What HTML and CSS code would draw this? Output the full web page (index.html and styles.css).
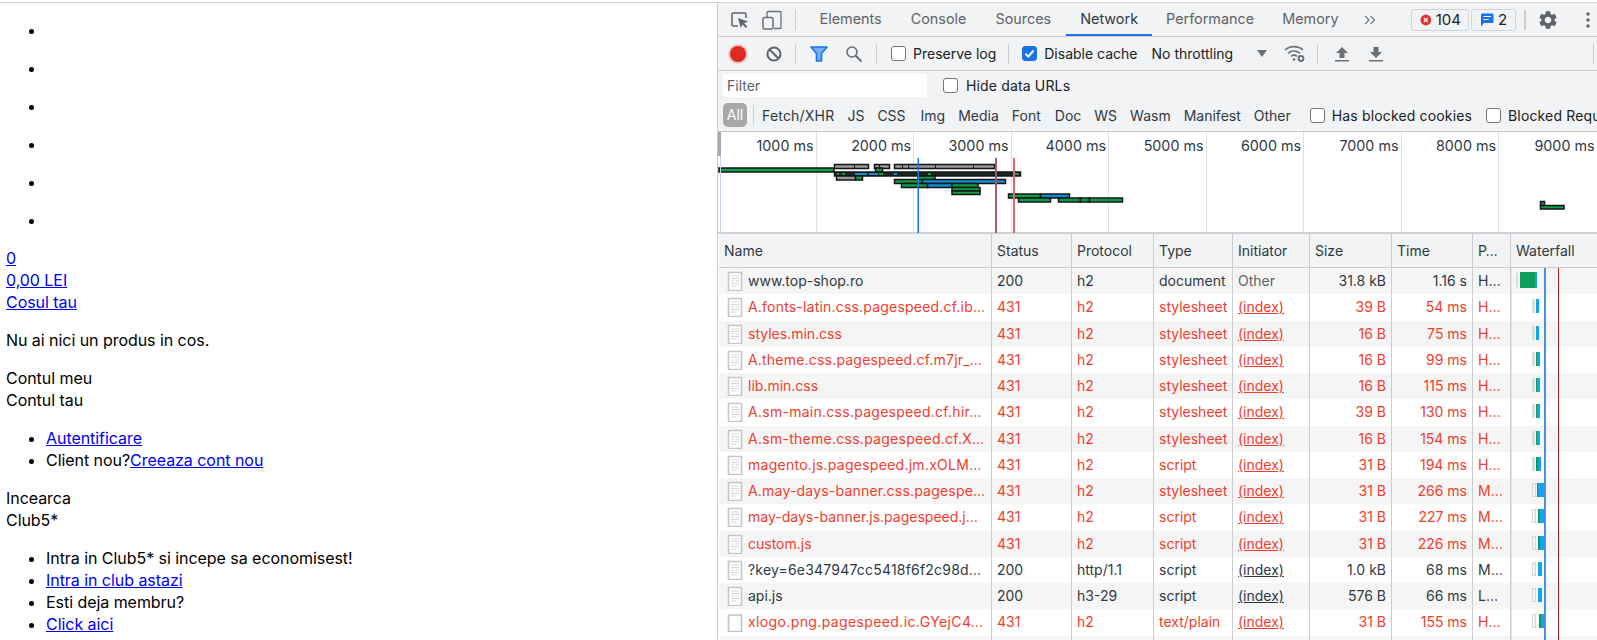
FILE: index.html
```html
<!DOCTYPE html>
<html lang="ro">
<head>
<meta charset="utf-8">
<title>top-shop.ro</title>
<link rel="stylesheet" href="styles.css">
</head>
<body>
<svg class="defs" width="0" height="0" aria-hidden="true">
  <symbol id="doc" viewBox="0 0 16 20">
    <path d="M1.500 1.500h13v18h-13z" fill="#fff" stroke="#c4c6c8" stroke-width="1.600"/>
    <path d="M4 5h8M4 7.500h8M4 10h3M8.500 10H12M4 12.500h8M4 15h5" stroke="#d5d7d9" stroke-width="1.200" fill="none"/>
  </symbol>
  <symbol id="blank" viewBox="0 0 16 20">
    <path d="M1.500 3h13v16.500h-13z" fill="#fff" stroke="#c0c2c4" stroke-width="1.600"/>
  </symbol>
</svg>
<div class="screen">
  <main class="page">
    <ul class="nav"><li></li><li></li><li></li><li></li><li></li><li></li></ul>
    <div><a href="#">0</a></div>
    <div><a href="#">0,00 LEI</a></div>
    <div><a href="#">Cosul tau</a></div>
    <p>Nu ai nici un produs in cos.</p>
    <div>Contul meu</div>
    <div>Contul tau</div>
    <ul>
      <li><a href="#">Autentificare</a></li>
      <li>Client nou?<a href="#">Creeaza cont nou</a></li>
    </ul>
    <div>Incearca</div>
    <div>Club5*</div>
    <ul>
      <li>Intra in Club5* si incepe sa economisest!</li>
      <li><a href="#">Intra in club astazi</a></li>
      <li>Esti deja membru?</li>
      <li><a href="#">Click aici</a></li>
    </ul>
  </main>
  <section class="devtools">
    <div class="tabbar">
      <svg class="ic ic-inspect" width="20" height="20" viewBox="0 0 20 20"><path d="M8 16H3.500A1.500 1.500 0 0 1 2 14.500V4.500A1.500 1.500 0 0 1 3.500 3h11A1.500 1.500 0 0 1 16 4.500V8" fill="none" stroke="#5f6368" stroke-width="1.500"/><path d="M8 8l10 3.500-4 1.700 3.300 3.300-1.400 1.400-3.300-3.300L10.800 18z" fill="#5f6368"/></svg>
      <svg class="ic ic-device" width="20" height="20" viewBox="0 0 20 20"><path d="M5 7V2.500A1 1 0 0 1 6 1.500h12a1 1 0 0 1 1 1v15a1 1 0 0 1-1 1h-6" fill="none" stroke="#6b7075" stroke-width="1.300"/><rect x="1" y="7.500" width="10" height="11.500" rx="1.500" fill="none" stroke="#6b7075" stroke-width="1.500"/></svg>
      <span class="sep sep-tab"></span>
      <span class="tab">Elements</span>
      <span class="tab">Console</span>
      <span class="tab">Sources</span>
      <span class="tab active">Network</span>
      <span class="tab tab-perf">Performance</span>
      <span class="tab">Memory</span>
      <svg class="ic ic-more" width="12" height="10" viewBox="0 0 12 10"><path d="M1 .8 5 5 1 9.200M6.500 .8 10.500 5l-4 4.200" fill="none" stroke="#6e7378" stroke-width="1.200"/></svg>
      <span class="badge badge-err"><svg width="12" height="12" viewBox="0 0 12 12"><circle cx="6" cy="6" r="5.500" fill="#e2342d"/><path d="M4 4l4 4M8 4l-4 4" stroke="#fff" stroke-width="1.300"/></svg>104</span>
      <span class="badge badge-msg"><svg width="14" height="14" viewBox="0 0 14 14"><path d="M1 1.500A1 1 0 0 1 2 .5h10.500a1 1 0 0 1 1 1V9a1 1 0 0 1-1 1H4l-3 3.500z" fill="#1a73e8"/><path d="M3.500 3.500h7.500M3.500 6.500h5" stroke="#fff" stroke-width="1.200"/></svg>2</span>
      <span class="sep sep-badge"></span>
      <svg class="ic ic-gear" width="22" height="22" viewBox="0 0 24 24"><path fill="#5f6368" d="M19.140 12.940c.04-.3.06-.61.06-.94 0-.32-.02-.64-.07-.94l2.030-1.580c.18-.14.23-.41.12-.61l-1.920-3.320c-.12-.22-.37-.29-.59-.22l-2.390.96c-.5-.38-1.030-.7-1.620-.94l-.36-2.540c-.04-.24-.24-.41-.48-.41h-3.840c-.24 0-.43.17-.47.41l-.36 2.540c-.59.24-1.130.57-1.620.94l-2.390-.96c-.22-.08-.47 0-.59.22L2.740 8.870c-.12.21-.08.47.12.61l2.030 1.580c-.05.3-.09.63-.09.94s.02.64.07.94l-2.030 1.580c-.18.14-.23.41-.12.61l1.920 3.320c.12.22.37.29.59.22l2.390-.96c.5.38 1.030.7 1.620.94l.36 2.540c.05.24.24.41.48.41h3.840c.24 0 .44-.17.47-.41l.36-2.540c.59-.24 1.130-.56 1.620-.94l2.390.96c.22.08.47 0 .59-.22l1.920-3.320c.12-.22.07-.47-.12-.61l-2.010-1.580zM12 15.600c-1.980 0-3.600-1.620-3.600-3.600s1.620-3.600 3.600-3.600 3.600 1.620 3.600 3.600-1.620 3.600-3.600 3.600z"/></svg>
      <svg class="ic ic-dots" width="4" height="16" viewBox="0 0 4 16"><circle cx="2" cy="2" r="1.700" fill="#5f6368"/><circle cx="2" cy="8" r="1.700" fill="#5f6368"/><circle cx="2" cy="14" r="1.700" fill="#5f6368"/></svg>
    </div>
    <div class="toolbar">
      <span class="record"></span>
      <svg class="ic ic-block" width="16" height="16" viewBox="0 0 16 16"><circle cx="8" cy="8" r="6.500" fill="none" stroke="#5f6368" stroke-width="2"/><path d="M3.500 3.500l9 9" stroke="#5f6368" stroke-width="2"/></svg>
      <span class="sep sep-a"></span>
      <svg class="ic ic-filter" width="18" height="16" viewBox="0 0 18 16"><path d="M1 1h16l-5.500 6.500V15h-5V7.500z" fill="#6fb1f7" stroke="#1a73e8" stroke-width="1.600" stroke-linejoin="round"/></svg>
      <svg class="ic ic-search" width="18" height="18" viewBox="0 0 18 18"><circle cx="7" cy="7" r="5" fill="none" stroke="#6b7075" stroke-width="1.600"/><path d="M10.700 10.700 16.500 16.500" stroke="#6b7075" stroke-width="2"/></svg>
      <span class="sep sep-b"></span>
      <span class="check check-preserve"></span>
      <span class="label">Preserve log</span>
      <span class="sep sep-c"></span>
      <span class="check checked check-cache"><svg width="15" height="15" viewBox="0 0 15 15"><path d="M3.500 7.800 6.300 10.600 11.500 4.500" fill="none" stroke="#fff" stroke-width="2"/></svg></span>
      <span class="label">Disable cache</span>
      <span class="label throttle">No throttling</span>
      <span class="caret"></span>
      <svg class="ic ic-wifi" width="22" height="18" viewBox="0 0 22 18"><path d="M1 5c5-4.500 13-4.500 18 0M4 8.300c3.500-3 8.500-3 12 0M7 11.300c2-1.500 4-1.500 6 0" fill="none" stroke="#6b7075" stroke-width="1.600"/><circle cx="10" cy="14.500" r="1.300" fill="#6b7075"/><circle cx="17" cy="13.500" r="2.400" fill="none" stroke="#6b7075" stroke-width="2"/></svg>
      <span class="sep sep-d"></span>
      <svg class="ic ic-up" width="14" height="16" viewBox="0 0 14 16"><path d="M7 1l6 6H9.500v5h-5V7H1zM0 14h14v1.500H0z" fill="#6b7075"/></svg>
      <svg class="ic ic-down" width="14" height="16" viewBox="0 0 14 16"><path d="M7 12l6-6H9.500V1h-5v5H1zM0 14h14v1.500H0z" fill="#6b7075"/></svg>
      <span class="sep sep-e"></span>
    </div>
    <div class="filterbar">
      <div class="filterrow">
        <span class="filterinput">Filter</span>
        <span class="check check-hide"></span>
        <span class="label">Hide data URLs</span>
      </div>
      <div class="typerow">
        <span class="pill">All</span>
        <span class="sep sep-type"></span>
        <span class="type type-fetch">Fetch/XHR</span>
        <span class="type">JS</span>
        <span class="type type-css">CSS</span>
        <span class="type">Img</span>
        <span class="type">Media</span>
        <span class="type type-font">Font</span>
        <span class="type">Doc</span>
        <span class="type">WS</span>
        <span class="type">Wasm</span>
        <span class="type">Manifest</span>
        <span class="type">Other</span>
        <span class="check check-cookies"></span>
        <span class="label">Has blocked cookies</span>
        <span class="check check-blocked"></span>
        <span class="label nowrap">Blocked Requests</span>
      </div>
    </div>
    <div class="overview">
      <div class="ticks">
        <span class="tick">1000 ms</span><span class="tick">2000 ms</span><span class="tick">3000 ms</span><span class="tick">4000 ms</span><span class="tick">5000 ms</span><span class="tick">6000 ms</span><span class="tick">7000 ms</span><span class="tick">8000 ms</span><span class="tick">9000 ms</span>
      </div>
      <span class="handle"></span>
      <svg class="chart" width="880" height="101" viewBox="717 131 880 101">
        <g stroke="#141414" stroke-width="1.500">
          <rect x="833.500" y="163.500" width="34" height="4" fill="#9a9a9a"/>
          <rect x="873.500" y="163.500" width="15" height="4" fill="#9a9a9a"/>
          <rect x="893.500" y="163.500" width="100" height="4" fill="#9a9a9a"/>
          <rect x="718" y="167" width="115" height="4" fill="#0f9d46"/>
          <rect x="874.500" y="167" width="7" height="4" fill="#0f9d46"/>
          <rect x="833.500" y="171" width="186" height="4" fill="#17271d"/>
          <rect x="835.500" y="175" width="19" height="4" fill="#9a9a9a"/>
          <rect x="854.500" y="175" width="7" height="4" fill="#0f9d46"/>
          <rect x="917" y="175" width="17" height="4" fill="#0f9d46"/>
          <rect x="893.500" y="178.500" width="28" height="4" fill="#0f9d46"/>
          <rect x="921.500" y="178.500" width="83" height="4" fill="#0a8fd6"/>
          <rect x="900.500" y="182.500" width="26" height="4" fill="#0f9d46"/>
          <rect x="926.500" y="182.500" width="24.500" height="4" fill="#0a8fd6"/>
          <rect x="951" y="182.500" width="26" height="4" fill="#0f9d46"/>
          <rect x="951" y="186.500" width="28" height="3.500" fill="#0f9d46"/>
          <rect x="951" y="190" width="28" height="3.500" fill="#0f9d46"/>
          <rect x="1007.500" y="193" width="32" height="4" fill="#0f9d46"/>
          <rect x="1039.500" y="193" width="29" height="4" fill="#0a8fd6"/>
          <rect x="1017.500" y="197" width="32" height="4" fill="#0f9d46"/>
          <rect x="1057.500" y="197" width="22" height="4" fill="#0f9d46"/>
          <rect x="1079.500" y="197" width="9" height="4" fill="#0f9d46"/>
          <rect x="1088.500" y="197" width="33" height="4" fill="#0f9d46"/>
          <rect x="1539.500" y="200.500" width="4" height="4" fill="#0f9d46"/>
          <rect x="1539.500" y="204.500" width="23.500" height="3.500" fill="#0f9d46"/>
        </g>
        <g fill="#0a8fd6">
          <rect x="854" y="172" width="12" height="2"/><rect x="868" y="172" width="9" height="2"/><rect x="893" y="172" width="3" height="2"/>
        </g>
        <g fill="#0f9d46">
          <rect x="836" y="172" width="2" height="2"/><rect x="841" y="172" width="3" height="2"/><rect x="878" y="172" width="4" height="2"/><rect x="927" y="172" width="3" height="2"/><rect x="1014" y="172" width="4" height="2"/>
        </g>
        <g stroke="#141414" stroke-width="1">
          <path d="M853.500 163v5M878.500 163v5M901.500 163v5M907.500 163v5M934.500 163v5M972.500 163v5"/>
        </g>
        <rect x="916.500" y="157" width="1.500" height="75" fill="#1a73e8"/>
        <rect x="994" y="157" width="2" height="75" fill="#a9586a"/>
        <rect x="1012" y="157" width="2" height="75" fill="#d9696b"/>
        <rect x="719" y="155" width="1" height="77" fill="#c5d3f0"/>
      </svg>
    </div>
    <div class="table">
      <div class="row head">
        <span class="cell">Name</span><span class="cell">Status</span><span class="cell">Protocol</span><span class="cell">Type</span><span class="cell">Initiator</span><span class="cell">Size</span><span class="cell">Time</span><span class="cell">P…</span><span class="cell">Waterfall</span>
      </div>
      <div class="row">
        <span class="cell name"><svg class="fileic" width="16" height="20"><use href="#doc"/></svg><span class="clip">www.top-shop.ro</span></span><span class="cell">200</span><span class="cell">h2</span><span class="cell">document</span><span class="cell muted">Other</span><span class="cell num">31.8 kB</span><span class="cell num">1.16 s</span><span class="cell">H…</span>
        <span class="cell wf"><i class="b idle" style="left:5px;width:2px"></i><i class="b tall green" style="left:9px;width:15px"></i><i class="b tall blue" style="left:24px;width:2px"></i></span>
      </div>
      <div class="row err">
        <span class="cell name"><svg class="fileic" width="16" height="20"><use href="#doc"/></svg><span class="clip long">A.fonts-latin.css.pagespeed.cf.ib…</span></span><span class="cell">431</span><span class="cell">h2</span><span class="cell">stylesheet</span><span class="cell"><u>(index)</u></span><span class="cell num">39 B</span><span class="cell num">54 ms</span><span class="cell">H…</span>
        <span class="cell wf"><i class="b idle" style="left:21px;width:3px"></i><i class="b blue" style="left:25px;width:3px"></i></span>
      </div>
      <div class="row err">
        <span class="cell name"><svg class="fileic" width="16" height="20"><use href="#doc"/></svg><span class="clip">styles.min.css</span></span><span class="cell">431</span><span class="cell">h2</span><span class="cell">stylesheet</span><span class="cell"><u>(index)</u></span><span class="cell num">16 B</span><span class="cell num">75 ms</span><span class="cell">H…</span>
        <span class="cell wf"><i class="b idle" style="left:21px;width:3px"></i><i class="b blue" style="left:25px;width:3px"></i></span>
      </div>
      <div class="row err">
        <span class="cell name"><svg class="fileic" width="16" height="20"><use href="#doc"/></svg><span class="clip long">A.theme.css.pagespeed.cf.m7jr_…</span></span><span class="cell">431</span><span class="cell">h2</span><span class="cell">stylesheet</span><span class="cell"><u>(index)</u></span><span class="cell num">16 B</span><span class="cell num">99 ms</span><span class="cell">H…</span>
        <span class="cell wf"><i class="b idle" style="left:21px;width:3px"></i><i class="b green" style="left:25px;width:1px"></i><i class="b blue" style="left:26px;width:3px"></i></span>
      </div>
      <div class="row err">
        <span class="cell name"><svg class="fileic" width="16" height="20"><use href="#doc"/></svg><span class="clip">lib.min.css</span></span><span class="cell">431</span><span class="cell">h2</span><span class="cell">stylesheet</span><span class="cell"><u>(index)</u></span><span class="cell num">16 B</span><span class="cell num">115 ms</span><span class="cell">H…</span>
        <span class="cell wf"><i class="b idle" style="left:21px;width:3px"></i><i class="b green" style="left:25px;width:1px"></i><i class="b blue" style="left:26px;width:3px"></i></span>
      </div>
      <div class="row err">
        <span class="cell name"><svg class="fileic" width="16" height="20"><use href="#doc"/></svg><span class="clip longer">A.sm-main.css.pagespeed.cf.hir…</span></span><span class="cell">431</span><span class="cell">h2</span><span class="cell">stylesheet</span><span class="cell"><u>(index)</u></span><span class="cell num">39 B</span><span class="cell num">130 ms</span><span class="cell">H…</span>
        <span class="cell wf"><i class="b idle" style="left:21px;width:3px"></i><i class="b green" style="left:25px;width:1px"></i><i class="b blue" style="left:26px;width:3px"></i></span>
      </div>
      <div class="row err">
        <span class="cell name"><svg class="fileic" width="16" height="20"><use href="#doc"/></svg><span class="clip longer">A.sm-theme.css.pagespeed.cf.X…</span></span><span class="cell">431</span><span class="cell">h2</span><span class="cell">stylesheet</span><span class="cell"><u>(index)</u></span><span class="cell num">16 B</span><span class="cell num">154 ms</span><span class="cell">H…</span>
        <span class="cell wf"><i class="b idle" style="left:21px;width:3px"></i><i class="b green" style="left:25px;width:1px"></i><i class="b blue" style="left:26px;width:3px"></i></span>
      </div>
      <div class="row err">
        <span class="cell name"><svg class="fileic" width="16" height="20"><use href="#doc"/></svg><span class="clip longer">magento.js.pagespeed.jm.xOLM…</span></span><span class="cell">431</span><span class="cell">h2</span><span class="cell">script</span><span class="cell"><u>(index)</u></span><span class="cell num">31 B</span><span class="cell num">194 ms</span><span class="cell">H…</span>
        <span class="cell wf"><i class="b idle" style="left:21px;width:3px"></i><i class="b green" style="left:25px;width:2px"></i><i class="b blue" style="left:27px;width:3px"></i></span>
      </div>
      <div class="row err">
        <span class="cell name"><svg class="fileic" width="16" height="20"><use href="#doc"/></svg><span class="clip long">A.may-days-banner.css.pagespe…</span></span><span class="cell">431</span><span class="cell">h2</span><span class="cell">stylesheet</span><span class="cell"><u>(index)</u></span><span class="cell num">31 B</span><span class="cell num">266 ms</span><span class="cell">M…</span>
        <span class="cell wf"><i class="b hollow" style="left:21px;width:4px"></i><i class="b green" style="left:26px;width:1px"></i><i class="b blue" style="left:27px;width:6px"></i></span>
      </div>
      <div class="row err">
        <span class="cell name"><svg class="fileic" width="16" height="20"><use href="#doc"/></svg><span class="clip">may-days-banner.js.pagespeed.j…</span></span><span class="cell">431</span><span class="cell">h2</span><span class="cell">script</span><span class="cell"><u>(index)</u></span><span class="cell num">31 B</span><span class="cell num">227 ms</span><span class="cell">M…</span>
        <span class="cell wf"><i class="b hollow" style="left:21px;width:4px"></i><i class="b green" style="left:27px;width:2px"></i><i class="b blue" style="left:29px;width:4px"></i></span>
      </div>
      <div class="row err">
        <span class="cell name"><svg class="fileic" width="16" height="20"><use href="#doc"/></svg><span class="clip">custom.js</span></span><span class="cell">431</span><span class="cell">h2</span><span class="cell">script</span><span class="cell"><u>(index)</u></span><span class="cell num">31 B</span><span class="cell num">226 ms</span><span class="cell">M…</span>
        <span class="cell wf"><i class="b hollow" style="left:21px;width:4px"></i><i class="b green" style="left:27px;width:2px"></i><i class="b blue" style="left:29px;width:4px"></i></span>
      </div>
      <div class="row">
        <span class="cell name"><svg class="fileic" width="16" height="20"><use href="#doc"/></svg><span class="clip long">?key=6e347947cc5418f6f2c98d…</span></span><span class="cell">200</span><span class="cell">http/1.1</span><span class="cell">script</span><span class="cell"><u>(index)</u></span><span class="cell num">1.0 kB</span><span class="cell num">68 ms</span><span class="cell">M…</span>
        <span class="cell wf"><i class="b hollow" style="left:21px;width:4px"></i><i class="b blue" style="left:27px;width:4px"></i></span>
      </div>
      <div class="row">
        <span class="cell name"><svg class="fileic" width="16" height="20"><use href="#doc"/></svg><span class="clip">api.js</span></span><span class="cell">200</span><span class="cell">h3-29</span><span class="cell">script</span><span class="cell"><u>(index)</u></span><span class="cell num">576 B</span><span class="cell num">66 ms</span><span class="cell">L…</span>
        <span class="cell wf"><i class="b hollow" style="left:21px;width:4px"></i><i class="b blue" style="left:27px;width:4px"></i></span>
      </div>
      <div class="row err">
        <span class="cell name"><svg class="fileic" width="16" height="20"><use href="#blank"/></svg><span class="clip longest">xlogo.png.pagespeed.ic.GYejC4…</span></span><span class="cell">431</span><span class="cell">h2</span><span class="cell">text/plain</span><span class="cell"><u>(index)</u></span><span class="cell num">31 B</span><span class="cell num">155 ms</span><span class="cell">H…</span>
        <span class="cell wf"><i class="b hollow" style="left:21px;width:4px"></i><i class="b green" style="left:28px;width:2px"></i><i class="b blue" style="left:30px;width:3px"></i></span>
      </div>
      <div class="row">
        <span class="cell name"></span><span class="cell"></span><span class="cell"></span><span class="cell"></span><span class="cell"></span><span class="cell"></span><span class="cell"></span><span class="cell"></span>
        <span class="cell wf"><i class="b green" style="left:29px;width:2px"></i><i class="b blue" style="left:31px;width:3px"></i></span>
      </div>
      <span class="vline vline-dom"></span>
      <span class="vline vline-load"></span>
    </div>
  </section>
</div>
</body>
</html>
```
FILE: styles.css
```css
* { box-sizing: border-box; }
html, body { margin: 0; height: 640px; overflow: hidden; background: #fff; }
.defs { position: absolute; }
.screen {
  display: flex;
  height: 638px;
  margin-top: 2px;
  border-top: 1px solid #d3d3d6;
  font-family: Inter, "Liberation Sans", sans-serif;
}
.page {
  width: 717px;
  flex: none;
  padding-left: 6px;
  font-size: 16px;
  line-height: 22px;
  letter-spacing: -.05px;
  color: #000;
  overflow: hidden;
}
.page a { color: #0000ee; }
.page p { margin: 16px 0; }
.page ul { margin: 16px 0; padding-left: 40px; }
.nav li { height: 22px; margin-bottom: 16px; }
.devtools {
  width: 880px;
  flex: none;
  display: flex;
  flex-direction: column;
  border-left: 1px solid #c9cbcf;
  font-size: 14px;
  color: #303942;
  background: #fff;
  overflow: hidden;
}
.ic { flex: none; display: block; }
.sep { flex: none; width: 1px; background: #cbcdd1; }

/* tab bar */
.tabbar {
  display: flex;
  align-items: center;
  height: 34px;
  flex: none;
  background: #f1f3f4;
  border-bottom: 1px solid #cbcdd1;
  color: #5f6368;
}
.ic-inspect { margin-left: 12px; }
.ic-device { margin-left: 12px; }
.sep-tab { height: 20px; margin: 0 9px 0 13px; }
.tab {
  height: 33px;
  line-height: 32px;
  padding: 0 14.500px;
  font-size: 14.400px;
  white-space: nowrap;
}
.tab.active {
  color: #303942;
  padding-right: 13.500px;
  border-bottom: 2px solid #1a73e8;
}
.tab-perf { padding-right: 13.500px; }
.ic-more { margin-left: 11px; }
.badge {
  display: flex;
  align-items: center;
  gap: 4px;
  height: 22px;
  padding: 0 7px 0 8px;
  border: 1px solid #d1d3d6;
  border-radius: 3px;
  color: #202124;
  font-size: 15px;
}
.badge-err { margin-left: 35px; width: 58px; }
.badge-msg { margin-left: 2px; width: 45px; }
.sep-badge { height: 20px; width: 2px; margin-left: 8px; }
.ic-gear { margin-left: 11px; }
.ic-dots { margin-left: 27px; }

/* toolbar */
.toolbar {
  display: flex;
  align-items: center;
  height: 34px;
  flex: none;
  background: #f1f3f4;
  border-bottom: 1px solid #cbcdd1;
  color: #202124;
}
.record {
  flex: none;
  width: 16px;
  height: 16px;
  margin-left: 12px;
  border-radius: 50%;
  background: #dc2a22;
  box-shadow: 0 0 0 2px rgba(220, 42, 34, .22);
}
.ic-block { margin-left: 20px; }
.sep-a { height: 20px; margin-left: 13px; }
.ic-filter { margin-left: 14px; }
.ic-search { margin-left: 17px; }
.sep-b { height: 20px; margin-left: 13px; }
.label { white-space: nowrap; color: #202124; }
.check {
  flex: none;
  display: block;
  width: 15px;
  height: 15px;
  border: 1px solid #767676;
  border-radius: 3px;
  background: #fff;
}
.check.checked { background: #1a73e8; border-color: #1a73e8; }
.check.checked svg { display: block; margin: -1px; }
.check-preserve { margin: 0 7px 0 14px; }
.sep-c { height: 20px; margin-left: 12px; }
.check-cache { margin: 0 7px 0 13px; }
.throttle { margin-left: 14px; }
.caret {
  flex: none;
  margin-left: 24px;
  width: 0;
  height: 0;
  border-left: 5px solid transparent;
  border-right: 5px solid transparent;
  border-top: 7px solid #6b7075;
}
.ic-wifi { margin-left: 17px; }
.sep-d { height: 20px; margin-left: 11px; }
.ic-up { margin-left: 17px; }
.ic-down { margin-left: 20px; }
.sep-e { height: 20px; margin-left: 210px; }

/* filter bar */
.filterbar {
  height: 61px;
  flex: none;
  background: #f1f3f4;
  border-bottom: 1px solid #cbcdd1;
  padding: 3px 0 0 5px;
}
.filterbar .label { letter-spacing: .15px; }
.filterrow { display: flex; align-items: center; height: 23px; }
.filterinput {
  flex: none;
  width: 204px;
  height: 23px;
  line-height: 24px;
  padding-left: 4px;
  background: #fff;
  color: #5f6368;
}
.check-hide { margin: 0 8px 0 16px; }
.typerow { display: flex; align-items: center; gap: 13px; height: 24px; margin-top: 6px; white-space: nowrap; }
.pill {
  flex: none;
  width: 24px;
  height: 24px;
  line-height: 24px;
  text-align: center;
  border-radius: 5px;
  background: #a6a8aa;
  color: #fff;
}
.sep-type { height: 20px; margin: 0 -4px 0 -7px; }
.type { color: #303942; }
.type-fetch { margin-left: -1px; letter-spacing: .2px; }
.type-css { margin-right: 2px; }
.type-font { margin-right: 1px; }
.check-cookies { margin-left: 6px; margin-right: -6px; }
.check-blocked { margin-left: 1px; margin-right: -6px; }

/* overview */
.overview {
  position: relative;
  height: 102px;
  flex: none;
  background: #fff;
  border-bottom: 2px solid #cfd1d4;
}
.ticks { display: flex; padding-left: 1px; height: 100px; }
.tick {
  flex: none;
  width: 97.500px;
  height: 100px;
  padding: 4px 2px 0 0;
  font-size: 14.300px;
  line-height: 20px;
  text-align: right;
  color: #303942;
  border-right: 1px solid #dfe0e2;
  white-space: nowrap;
}
.tick:last-child { border-right: 0; }
.handle { position: absolute; left: 0; top: 0; width: 3px; height: 24px; background: #a8a8a8; }
.chart { position: absolute; left: 0; top: 0; display: block; }

/* table */
.table { position: relative; flex: 1; min-height: 0; overflow: hidden; padding-left: 1px; }
.row {
  display: grid;
  grid-template-columns: 272px 80px 82px 79px 77px 82px 81px 38px 86px;
  height: 26.250px;
  background: #fff;
}
.row:nth-child(even) { background: #f5f5f5; }
.row.head {
  height: 34px;
  background: #f1f3f4;
  border-bottom: 1px solid #cbcdd1;
}
.cell {
  display: block;
  position: relative;
  padding: 0 5px;
  line-height: 26px;
  white-space: nowrap;
  overflow: hidden;
  border-left: 1px solid #cbcdd1;
}
.row .cell:first-child { border-left: 0; }
.head .cell { line-height: 33px; }
.name { display: flex; align-items: center; gap: 5px; padding-left: 8px; }
.fileic { flex: none; display: block; }
.clip { overflow: hidden; }
.clip.long { letter-spacing: .2px; }
.clip.longer { letter-spacing: .27px; }
.clip.longest { letter-spacing: .38px; }
.num { text-align: right; }
.muted { color: #5f6368; }
.err .cell { color: #f03d2e; }
u { text-underline-offset: 1px; }
.wf { padding: 0; overflow: visible; box-shadow: inset 1px 0 0 #e3e3e3; }
.b { position: absolute; top: 5px; height: 14px; }
.b.tall { top: 4px; height: 16px; }
.idle { background: #dcdcdc; }
.hollow { border: 1px solid #d6d6d6; background: #f4f4f4; }
.green { background: #0f9d58; }
.blue { background: #12a5f0; }
.vline { position: absolute; top: 34px; bottom: 0; }
.vline-dom { left: 826px; width: 2px; background: #4a90e2; }
.vline-load { left: 840px; width: 1px; background: #b21f1f; }
```
